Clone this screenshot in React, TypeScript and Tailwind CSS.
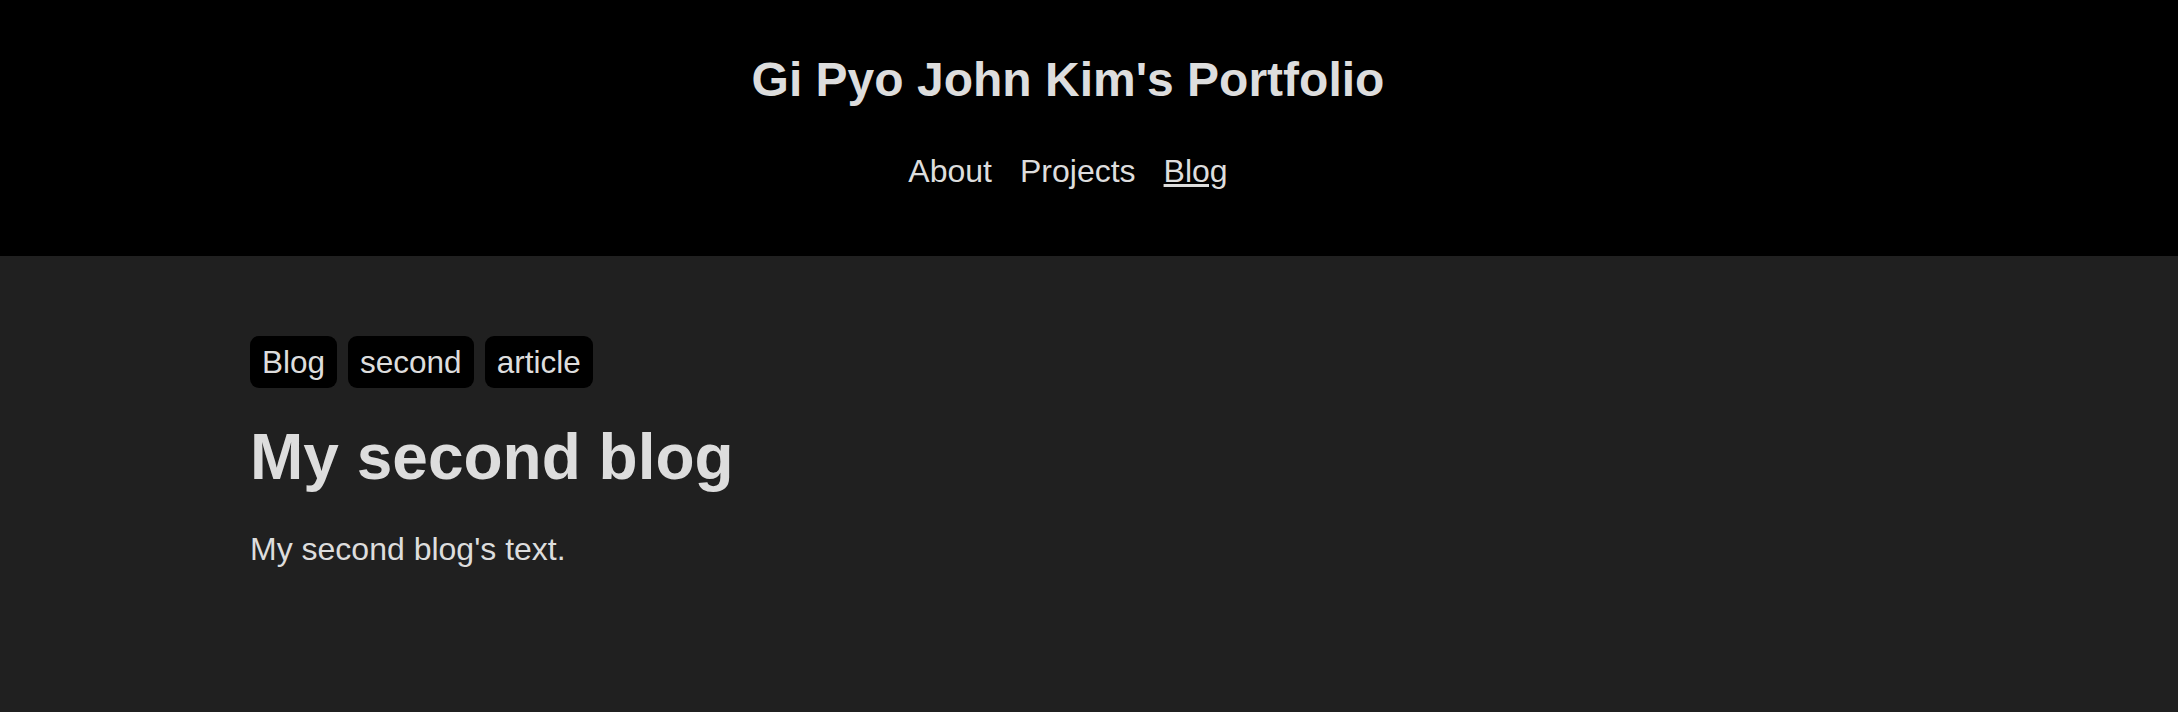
export default function App() {
  return (
    <div className="min-h-[712px] bg-[#202020] text-[#dddddd]" style={{ fontFamily: '"Liberation Sans", Arial, Helvetica, sans-serif' }}>
      <header className="bg-black pt-[53px] pb-[67px] pr-[42px] flex flex-col items-center">
        <h1 className="text-[48px] font-bold leading-[54px]">Gi Pyo John Kim's Portfolio</h1>
        <nav className="mt-[46px] flex gap-[28px] text-[32px] leading-[36px]">
          <a className="cursor-pointer">About</a>
          <a className="cursor-pointer">Projects</a>
          <a className="cursor-pointer underline">Blog</a>
        </nav>
      </header>
      <main className="pl-[250px] pt-[80px]">
        <div className="flex gap-[11px]">
          {["Blog", "second", "article"].map((t) => (
            <span key={t} className="bg-black rounded-[9px] px-[12px] py-[8px] text-[31.5px] leading-[36px]">
              {t}
            </span>
          ))}
        </div>
        <h2 className="mt-[33px] text-[64px] font-bold leading-[72px]">My second blog</h2>
        <p className="mt-[38px] text-[32px] leading-[36px]">My second blog's text.</p>
      </main>
    </div>
  );
}
